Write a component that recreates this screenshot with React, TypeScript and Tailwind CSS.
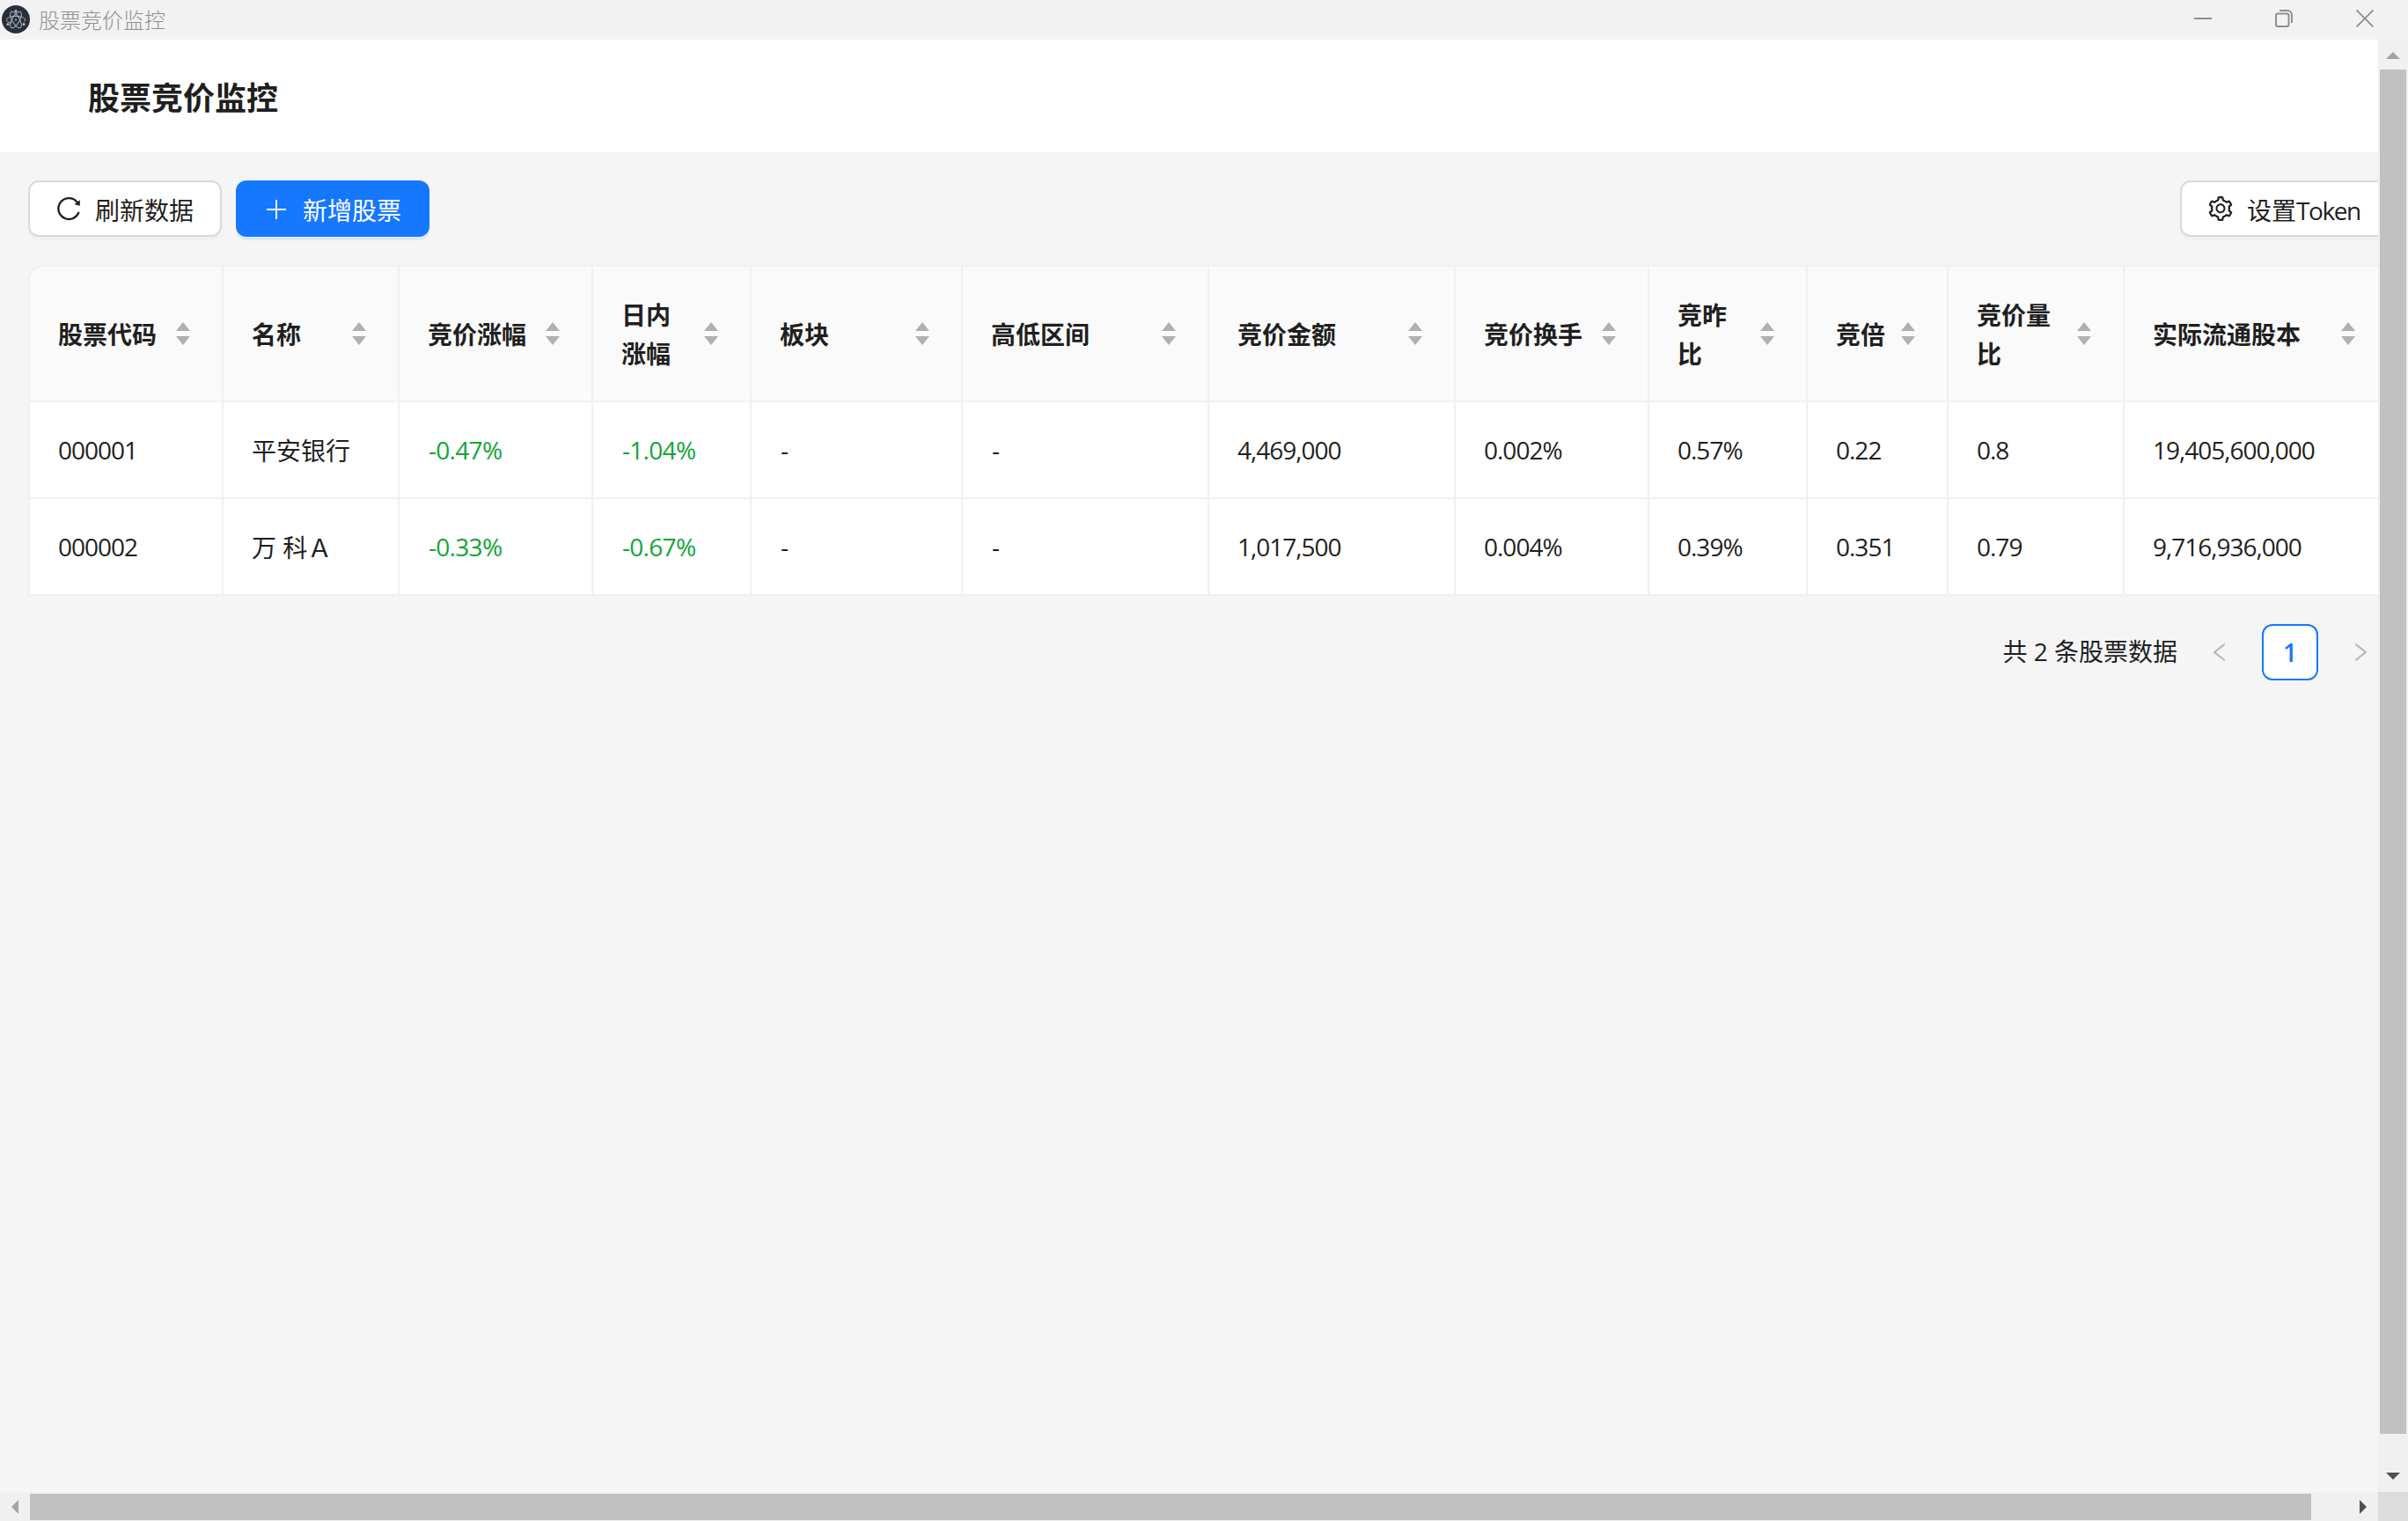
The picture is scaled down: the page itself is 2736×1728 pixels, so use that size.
import { AiOutlineLeft, AiOutlineReload, AiOutlineRight, AiOutlineSetting } from "react-icons/ai";

const columns = [
    { title: "股票代码", key: "code" },
    { title: "名称", key: "name" },
    { title: "竞价涨幅", key: "bidChange" },
    { title: "日内涨幅", key: "dayChange" },
    { title: "板块", key: "sector" },
    { title: "高低区间", key: "range" },
    { title: "竞价金额", key: "amount" },
    { title: "竞价换手", key: "turnover" },
    { title: "竞昨比", key: "yesterdayRatio" },
    { title: "竞倍", key: "multiple" },
    { title: "竞价量比", key: "volumeRatio" },
    { title: "实际流通股本", key: "shares" },
];

const stocks: Record<string, string>[] = [
    {
        code: "000001",
        name: "平安银行",
        bidChange: "-0.47%",
        dayChange: "-1.04%",
        sector: "-",
        range: "-",
        amount: "4,469,000",
        turnover: "0.002%",
        yesterdayRatio: "0.57%",
        multiple: "0.22",
        volumeRatio: "0.8",
        shares: "19,405,600,000",
    },
    {
        code: "000002",
        name: "万 科Ａ",
        bidChange: "-0.33%",
        dayChange: "-0.67%",
        sector: "-",
        range: "-",
        amount: "1,017,500",
        turnover: "0.004%",
        yesterdayRatio: "0.39%",
        multiple: "0.351",
        volumeRatio: "0.79",
        shares: "9,716,936,000",
    },
];

const cellStyle = (key: string) => {
    if (key === "name") return "px-8 pt-px";
    if (key.endsWith("Change")) return "pr-8 pl-[33px] tracking-[-0.7px] text-[#12a534]";
    if (key === "sector" || key === "range") return "pr-8 pl-[33px]";
    return "px-8 tracking-[-1px]";
};

const ElectronLogo = () => {
    return (
        <svg className="size-8" viewBox="0 0 32 32" fill="none" stroke="#a9bcc6" strokeWidth="1">
            <circle cx="16" cy="16" r="16" fill="#2b2e3a" stroke="none" />
            <ellipse cx="16" cy="16.500" rx="10.500" ry="4.200" transform="rotate(60 16 16.500)" />
            <ellipse cx="16" cy="16.500" rx="10.500" ry="4.200" transform="rotate(-60 16 16.500)" />
            <path d="M25 18.700c1-0.700 1.500-1.500 1.500-2.200 0-2.300-4.700-4.200-10.500-4.200S5.500 14.200 5.500 16.500c0 1.600 2.200 3 5.500 3.700" />
            <g fill="#a9bcc6" stroke="none">
                <circle cx="16" cy="16.500" r="1.100" />
                <circle cx="16" cy="6.500" r="1.500" />
                <circle cx="7" cy="21.500" r="1.500" />
                <circle cx="25" cy="21.500" r="1.500" />
            </g>
        </svg>
    );
};

const TitleBar = () => {
    return (
        <div className="flex h-[45px] shrink-0 items-center bg-[#f2f2f2] pl-[2px] text-[#8f8f8f]">
            <div className="mb-px">
                <ElectronLogo />
            </div>
            <span className="ml-[10px] text-[24px] leading-none font-light">股票竞价监控</span>
            <div className="mr-[39px] mb-[3px] ml-auto flex items-center gap-[72px]">
                <svg className="size-5" viewBox="0 0 20 20" stroke="currentColor" strokeWidth="2">
                    <path d="M0 10h20" />
                </svg>
                <svg className="size-5" viewBox="0 0 20 20" fill="none" stroke="currentColor" strokeWidth="2">
                    <rect x="1" y="4.500" width="14.500" height="14.500" rx="2" />
                    <path d="M5 1h9a5 5 0 0 1 5 5v9" />
                </svg>
                <svg className="size-5" viewBox="0 0 20 20" stroke="currentColor" strokeWidth="1.800">
                    <path d="M0.500 0.500l19 19M19.500 0.500l-19 19" />
                </svg>
            </div>
        </div>
    );
};

const Sorter = () => {
    return (
        <svg className="ml-2 h-[26px] w-6 shrink-0" viewBox="0 0 24 26" fill="#b0b0b0">
            <path d="M12 0l8 10H4z" />
            <path d="M12 26l8-10H4z" />
        </svg>
    );
};

const Toolbar = () => {
    return (
        <div className="flex">
            <button className="flex h-16 items-center gap-4 rounded-xl border-2 border-[#d9d9d9] bg-white px-[30px] shadow-[0_4px_0_rgba(0,0,0,0.02)]">
                <AiOutlineReload className="-m-0.5 size-8" />
                <span className="pt-[3px]">刷新数据</span>
            </button>
            <button className="ml-4 flex h-16 items-center gap-4 rounded-xl bg-[#1677ff] px-8 text-white shadow-[0_4px_0_rgba(5,145,255,0.1)]">
                <svg className="mt-px size-7" viewBox="0 0 28 28" stroke="currentColor" strokeWidth="2">
                    <path d="M14 3v22M3 14h22" />
                </svg>
                <span className="pt-[3px]">新增股票</span>
            </button>
            <button className="ml-auto flex h-16 w-[237px] items-center gap-4 rounded-xl border-2 border-[#d9d9d9] bg-white pl-[30px] shadow-[0_4px_0_rgba(0,0,0,0.02)]">
                <AiOutlineSetting className="-m-0.5 size-8" />
                <span className="pt-[3px]">
                    设置<span className="tracking-[-1.4px]">Token</span>
                </span>
            </button>
        </div>
    );
};

const StockTable = () => {
    return (
        <table className="mt-8 w-[2682px] table-fixed border-separate border-spacing-0 rounded-tl-2xl border-t-2 border-l-2 border-[#f0f0f0] text-left">
            <colgroup>
                <col className="w-[220px]" />
                <col className="w-[200px]" />
                <col className="w-[220px]" />
                <col className="w-[180px]" />
                <col className="w-[240px]" />
                <col className="w-[280px]" />
                <col className="w-[280px]" />
                <col className="w-[220px]" />
                <col className="w-[180px]" />
                <col className="w-[160px]" />
                <col className="w-[200px]" />
                <col className="w-[300px]" />
            </colgroup>
            <thead>
                <tr>
                    {columns.map((col) => (
                        <th
                            key={col.key}
                            className="h-[154px] border-r-2 border-b-2 border-[#f0f0f0] bg-[#fafafa] px-8 py-0 font-bold first:rounded-tl-[14px]"
                        >
                            <div className="flex items-center">
                                <span className="flex-1 pt-[2px]">{col.title}</span>
                                <Sorter />
                            </div>
                        </th>
                    ))}
                </tr>
            </thead>
            <tbody>
                {stocks.map((stock) => (
                    <tr key={stock.code}>
                        {columns.map((col) => (
                            <td
                                key={col.key}
                                className={
                                    "h-[110px] border-r-2 border-b-2 border-[#f0f0f0] bg-white py-0 whitespace-nowrap " +
                                    cellStyle(col.key)
                                }
                            >
                                {stock[col.key]}
                            </td>
                        ))}
                    </tr>
                ))}
            </tbody>
        </table>
    );
};

const Pagination = () => {
    return (
        <div className="mt-8 flex h-16 items-center justify-end gap-4">
            <span className="pb-[2px]">共 2 条股票数据</span>
            <button className="flex size-16 items-center justify-center text-[#b8b8b8]">
                <AiOutlineLeft className="size-7" />
            </button>
            <button className="flex size-16 items-center justify-center rounded-xl border-2 border-[#1677ff] bg-white font-semibold text-[#1677ff]">
                1
            </button>
            <button className="flex size-16 items-center justify-center text-[#b8b8b8]">
                <AiOutlineRight className="size-7" />
            </button>
        </div>
    );
};

const VerticalScrollbar = () => {
    return (
        <div className="flex w-[34px] shrink-0 flex-col items-center bg-[#f0f0f0]">
            <svg className="mt-[14px] h-2 w-4 shrink-0" viewBox="0 0 16 8" fill="#a3a3a3">
                <path d="M8 0l8 8H0z" />
            </svg>
            <div className="mt-3 h-[1550px] w-[30px] shrink-0 bg-[#c1c1c1]" />
            <svg className="mt-11 h-2 w-4 shrink-0" viewBox="0 0 16 8" fill="#505050">
                <path d="M8 8l8-8H0z" />
            </svg>
        </div>
    );
};

const HorizontalScrollbar = () => {
    return (
        <div className="flex h-[33px] shrink-0 bg-[#f0f0f0]">
            <div className="flex flex-1 items-center">
                <svg className="ml-[13px] h-4 w-2" viewBox="0 0 8 16" fill="#a3a3a3">
                    <path d="M0 8l8-8v16z" />
                </svg>
                <div className="mt-px ml-[13px] h-[30px] w-[2592px] bg-[#c1c1c1]" />
                <svg className="ml-[55px] h-4 w-2" viewBox="0 0 8 16" fill="#505050">
                    <path d="M8 8L0 0v16z" />
                </svg>
            </div>
            <div className="w-[34px] bg-[#dcdcdc]" />
        </div>
    );
};

const App = () => {
    return (
        <div className="flex h-[1728px] w-[2736px] flex-col overflow-hidden bg-[#f5f5f5] font-['Open_Sans','Noto_Sans_CJK_SC',sans-serif] text-[28px] leading-[44px] font-[370] text-[#1f1f1f]">
            <TitleBar />
            <div className="flex min-h-0 flex-1">
                <div className="min-w-0 flex-1 overflow-hidden">
                    <header className="flex h-32 items-center bg-white pt-[5px] pl-[100px]">
                        <h1 className="text-[36px] font-bold">股票竞价监控</h1>
                    </header>
                    <main className="w-[2746px] p-8">
                        <Toolbar />
                        <StockTable />
                        <Pagination />
                    </main>
                </div>
                <VerticalScrollbar />
            </div>
            <HorizontalScrollbar />
        </div>
    );
};

export default App;
